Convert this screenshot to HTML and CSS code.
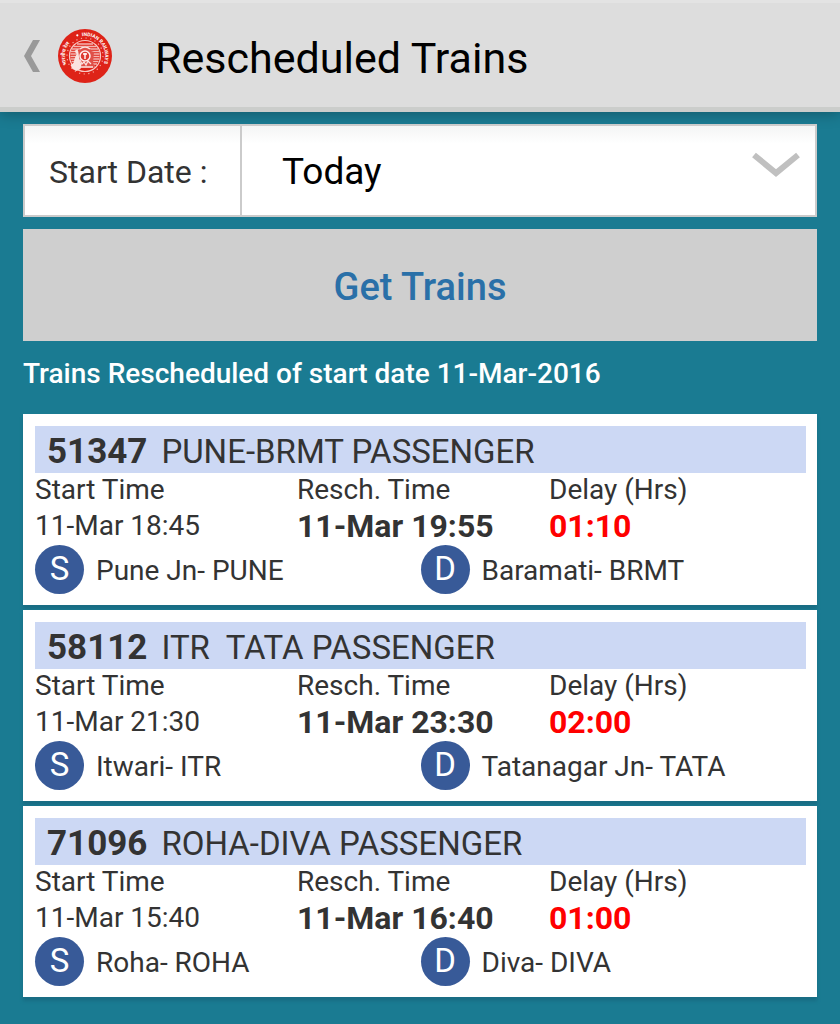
FILE: index.html
```html
<!DOCTYPE html>
<html lang="en">
<head>
<meta charset="utf-8">
<meta name="viewport" content="width=device-width, initial-scale=1">
<title>Rescheduled Trains</title>
<link rel="stylesheet" href="styles.css">
</head>
<body>
<header class="app-bar">
  <button class="back" type="button" aria-label="Back">
    <svg class="back-icon" viewBox="0 0 16 32" aria-hidden="true"><path d="M9 0h7L7 16l9 16H9L0 16z" fill="#999"/></svg>
  </button>
  <svg class="logo" viewBox="0 0 54 54" role="img" aria-label="Indian Railways">
    <defs>
      <path id="ring-left" d="M8.900 35.500A20 20 0 0 1 23.500 7.300"/>
      <path id="ring-right" d="M24 7.200A20 20 0 0 1 35.500 45.100"/>
    </defs>
    <circle cx="27" cy="27" r="27" fill="#de2318"/>
    <circle cx="27" cy="27" r="18" fill="none" stroke="#f6aaa4" stroke-width="1.200" stroke-dasharray="1.200 3.510"/>
    <circle cx="27" cy="27" r="15.500" fill="#de2318" stroke="#f8c9c5" stroke-width="1.200"/>
    <path d="M19 15h16M15.500 17.500h23M14 20h26M13 22.500h28M12.500 25h29M12.500 27.500h29M12.500 30h29M13.500 32.500h27M15 35h24M17 37.500h20" stroke="#f3b7b2" stroke-width="1.300"/>
    <path d="M21 22c1-6 11-6 12 0l3 1-1 11 2 4H17l2-4-1-11z" fill="#df5048"/>
    <path d="M12.500 36l3-2 1-4 2-5-2-3 3-2 1 4 1 8 2 3-1 5-4 2-4-2z" fill="#fbe3e0"/>
    <path d="M22 20q5-4 10 0M20 35l2-4 2 4 2-2 2 3 2-4 3 3M20 38h15" fill="none" stroke="#fbe3e0" stroke-width="1.300"/>
    <circle cx="27" cy="27" r="5" fill="#de3a30" stroke="#fff0ee" stroke-width="1.500"/>
    <path d="M27 24v6M25 25h4" stroke="#fff" stroke-width="1.400"/>
    <circle cx="19.300" cy="6.300" r="1.100" fill="#fff"/>
    <text class="logo-text" lang="hi"><textPath href="#ring-left">भारतीय रेल</textPath></text>
    <text class="logo-text"><textPath href="#ring-right">INDIAN RAILWAYS</textPath></text>
  </svg>
  <h1 class="title">Rescheduled Trains</h1>
</header>

<main class="content">
  <form class="search">
    <div class="date-row">
      <label class="date-label" for="start-date">Start Date :</label>
      <div class="date-field">
        <select class="date-select" id="start-date"><option>Today</option></select>
        <svg class="chevron" viewBox="0 0 48 26" aria-hidden="true"><path d="M2 3l22 18L46 3" fill="none" stroke="#c0c0c0" stroke-width="6"/></svg>
      </div>
    </div>
    <button class="submit" type="button">Get Trains</button>
  </form>

  <h2 class="summary">Trains Rescheduled of start date 11-Mar-2016</h2>

  <div class="trains">
    <article class="card">
      <h3 class="train"><b class="number">51347</b><span class="name">PUNE-BRMT PASSENGER</span></h3>
      <dl class="times">
        <div><dt>Start Time</dt><dd>11-Mar 18:45</dd></div>
        <div><dt>Resch. Time</dt><dd class="strong">11-Mar 19:55</dd></div>
        <div><dt>Delay (Hrs)</dt><dd class="strong delay">01:10</dd></div>
      </dl>
      <div class="stations">
        <div class="station"><span class="badge">S</span><span class="place">Pune Jn- PUNE</span></div>
        <div class="station"><span class="badge">D</span><span class="place">Baramati- BRMT</span></div>
      </div>
    </article>
    <article class="card">
      <h3 class="train"><b class="number">58112</b><span class="name">ITR&nbsp; TATA PASSENGER</span></h3>
      <dl class="times">
        <div><dt>Start Time</dt><dd>11-Mar 21:30</dd></div>
        <div><dt>Resch. Time</dt><dd class="strong">11-Mar 23:30</dd></div>
        <div><dt>Delay (Hrs)</dt><dd class="strong delay">02:00</dd></div>
      </dl>
      <div class="stations">
        <div class="station"><span class="badge">S</span><span class="place">Itwari- ITR</span></div>
        <div class="station"><span class="badge">D</span><span class="place">Tatanagar Jn- TATA</span></div>
      </div>
    </article>
    <article class="card">
      <h3 class="train"><b class="number">71096</b><span class="name">ROHA-DIVA PASSENGER</span></h3>
      <dl class="times">
        <div><dt>Start Time</dt><dd>11-Mar 15:40</dd></div>
        <div><dt>Resch. Time</dt><dd class="strong">11-Mar 16:40</dd></div>
        <div><dt>Delay (Hrs)</dt><dd class="strong delay">01:00</dd></div>
      </dl>
      <div class="stations">
        <div class="station"><span class="badge">S</span><span class="place">Roha- ROHA</span></div>
        <div class="station"><span class="badge">D</span><span class="place">Diva- DIVA</span></div>
      </div>
    </article>
  </div>
</main>
</body>
</html>
```
FILE: styles.css
```css
* { box-sizing: border-box; }

body {
  margin: 0;
  min-height: 100vh;
  background: #1a7b92;
  color: #333;
  font-family: Roboto, "Noto Sans", sans-serif;
  font-size: 28px;
}

h1, h2, h3, dl, dd { margin: 0; font-weight: 400; }

button, select { font: inherit; border: 0; border-radius: 0; padding: 0; }

.app-bar {
  display: flex;
  align-items: center;
  height: 112px;
  padding: 2px 24px 0;
  background: #ddd;
  border-top: 3px solid #e3e3e3;
  border-bottom: 5px solid #cbcdcb;
  box-shadow: 0 1px 14px rgba(0, 0, 0, 0.3);
}

.back { display: flex; background: none; }
.back-icon { width: 16px; height: 32px; }
.logo { width: 54px; height: 54px; margin-left: 18px; }
.logo-text { font-size: 5px; font-weight: 700; fill: #fff; }
.title { margin-left: 43px; padding-top: 4px; color: #000; font-size: 43px; line-height: 50px; }

.content { padding: 12px 23px 28px; }

.search { display: grid; gap: 12px; }

.date-row {
  display: grid;
  grid-template-columns: 217px 1fr;
  height: 93px;
  border: 2px solid #cbcbcb;
  background: linear-gradient(#f4f5f5, #fff 18px);
}
.date-label {
  display: flex;
  align-items: center;
  padding: 2px 0 0 24px;
  border-right: 2px solid #cbcbcb;
  font-size: 32px;
}
.date-field { position: relative; display: grid; }
.date-select {
  appearance: none;
  width: 100%;
  padding: 2px 64px 0 40px;
  background: transparent;
  color: #000;
  font-size: 37px;
}
.chevron { position: absolute; top: 26px; right: 15px; width: 48px; height: 26px; pointer-events: none; }

.submit {
  height: 112px;
  padding-top: 4px;
  background: #cfcfcf;
  color: #2a70a8;
  font-size: 38px;
  font-weight: 500;
}

.summary { margin: 16px 0 24px; color: #fff; font-size: 28px; font-weight: 500; line-height: 33px; }

.trains { display: grid; gap: 5px; }

.card { padding: 12px 11px 11px 12px; background: #fff; box-shadow: 0 4px 3px #196d84; }

.train {
  display: flex;
  align-items: center;
  gap: 14px;
  height: 47px;
  padding: 3px 12px 0;
  background: #ccd8f4;
  font-size: 33px;
}
.number { font-size: 35px; font-weight: 700; }

.times { display: grid; grid-template-columns: 262fr 252fr 257fr; }
.times dt { line-height: 34px; }
.times dd { line-height: 37px; }
.times .strong { font-size: 32px; font-weight: 700; line-height: 38px; }
.times .delay { color: #f00; }

.stations { display: grid; grid-template-columns: 1fr 1fr; }
.station { display: flex; align-items: center; gap: 12px; }
.place { padding-top: 2px; }
.badge {
  display: flex;
  justify-content: center;
  width: 49px;
  height: 49px;
  border-radius: 50%;
  background: #385a98;
  color: #fff;
  font-size: 33px;
  line-height: 48px;
}
```
